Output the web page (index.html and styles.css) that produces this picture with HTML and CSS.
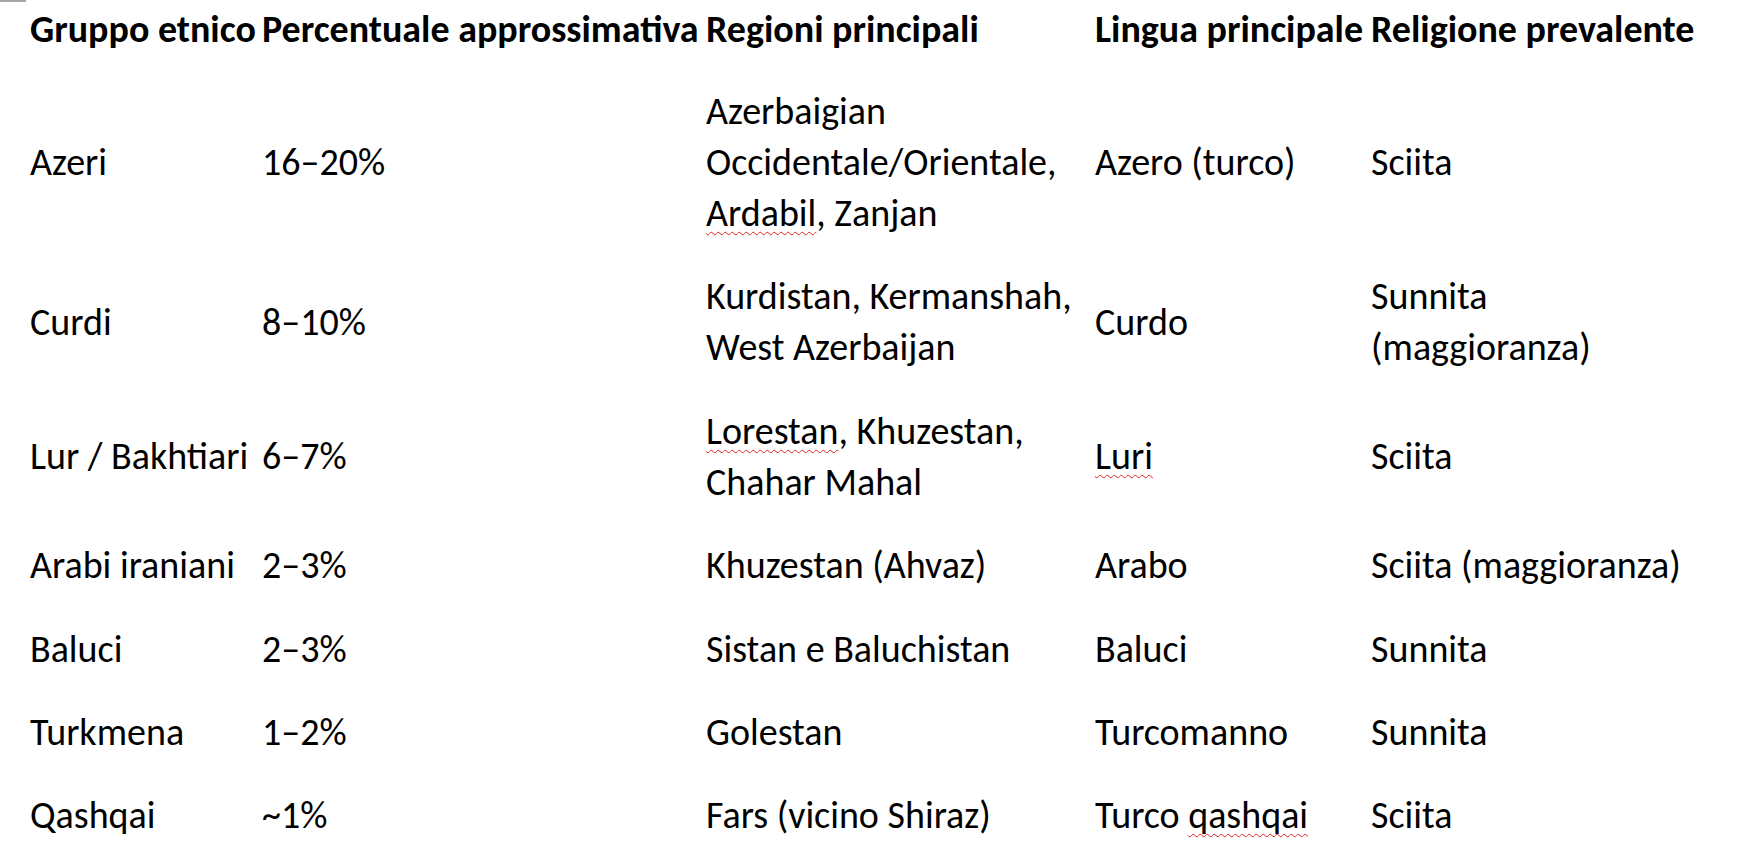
FILE: index.html
```html
<!DOCTYPE html>
<html lang="it">
<head>
<meta charset="utf-8">
<title>Gruppi etnici</title>
<link rel="stylesheet" href="styles.css">
</head>
<body>
<div class="ruler-mark"></div>
<table class="ethnic">
  <colgroup>
    <col class="c1"><col class="c2"><col class="c3"><col class="c4"><col class="c5">
  </colgroup>
  <thead>
    <tr>
      <th>Gruppo etnico</th>
      <th>Percentuale approssimativa</th>
      <th>Regioni principali</th>
      <th>Lingua principale</th>
      <th>Religione prevalente</th>
    </tr>
  </thead>
  <tbody>
    <tr>
      <td class="mid">Azeri</td>
      <td class="mid">16–20%</td>
      <td>Azerbaigian<br>Occidentale/Orientale,<br><span class="spell">Ardabil</span>, Zanjan</td>
      <td class="mid">Azero (turco)</td>
      <td class="mid">Sciita</td>
    </tr>
    <tr>
      <td class="mid">Curdi</td>
      <td class="mid">8–10%</td>
      <td>Kurdistan, Kermanshah,<br>West Azerbaijan</td>
      <td class="mid">Curdo</td>
      <td>Sunnita<br>(maggioranza)</td>
    </tr>
    <tr>
      <td class="mid">Lur / Bakhtiari</td>
      <td class="mid">6–7%</td>
      <td><span class="spell">Lorestan</span>, Khuzestan,<br>Chahar Mahal</td>
      <td class="mid"><span class="spell">Luri</span></td>
      <td class="mid">Sciita</td>
    </tr>
    <tr>
      <td>Arabi iraniani</td>
      <td>2–3%</td>
      <td>Khuzestan (Ahvaz)</td>
      <td>Arabo</td>
      <td>Sciita (maggioranza)</td>
    </tr>
    <tr>
      <td>Baluci</td>
      <td>2–3%</td>
      <td>Sistan e Baluchistan</td>
      <td>Baluci</td>
      <td>Sunnita</td>
    </tr>
    <tr>
      <td>Turkmena</td>
      <td>1–2%</td>
      <td>Golestan</td>
      <td>Turcomanno</td>
      <td>Sunnita</td>
    </tr>
    <tr>
      <td>Qashqai</td>
      <td>~1%</td>
      <td>Fars (vicino Shiraz)</td>
      <td>Turco <span class="spell">qashqai</span></td>
      <td>Sciita</td>
    </tr>
  </tbody>
</table>
</body>
</html>
```

FILE: styles.css
```css
html, body {
  margin: 0;
  padding: 0;
  background: #ffffff;
}

body {
  font-family: "Carlito", "Lato", "Liberation Sans", sans-serif;
  color: #000000;
  width: 1738px;
  height: 847px;
  overflow: hidden;
}

.ruler-mark {
  width: 26px;
  height: 2px;
  background: #a6a6a6;
}

.ethnic {
  border-collapse: collapse;
  table-layout: fixed;
  width: 1708px;
  margin-left: 30px;
  margin-top: 2px;
  font-size: 38px;
  line-height: 51px;
}

.c1 { width: 232px; }
.c2 { width: 444px; }
.c3 { width: 389px; }
.c4 { width: 276px; }
.c5 { width: 367px; }

.ethnic th,
.ethnic td {
  padding: 0 0 32.4px 0;
  text-align: left;
  vertical-align: top;
  white-space: nowrap;
}

.ethnic th {
  font-weight: 700;
  padding-bottom: 31px;
}

.ethnic td.mid {
  vertical-align: middle;
}

.spell {
  text-decoration-line: underline;
  text-decoration-style: wavy;
  text-decoration-color: #e02020;
  text-decoration-thickness: 1px;
  text-underline-offset: 5px;
  text-decoration-skip-ink: none;
}
```
